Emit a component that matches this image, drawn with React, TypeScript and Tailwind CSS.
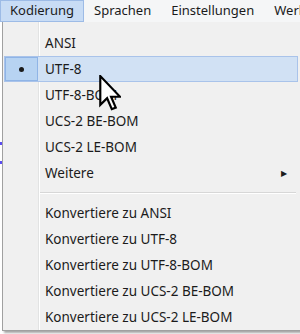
const font = { fontFamily: '"Segoe UI", "Noto Sans", "Open Sans", sans-serif' };

type Row =
  | { kind: "item"; label: string; checked?: boolean; active?: boolean; sub?: boolean }
  | { kind: "sep" };

const rows: Row[] = [
  { kind: "item", label: "ANSI" },
  { kind: "item", label: "UTF-8", checked: true, active: true },
  { kind: "item", label: "UTF-8-BOM" },
  { kind: "item", label: "UCS-2 BE-BOM" },
  { kind: "item", label: "UCS-2 LE-BOM" },
  { kind: "item", label: "Weitere", sub: true },
  { kind: "sep" },
  { kind: "item", label: "Konvertiere zu ANSI" },
  { kind: "item", label: "Konvertiere zu UTF-8" },
  { kind: "item", label: "Konvertiere zu UTF-8-BOM" },
  { kind: "item", label: "Konvertiere zu UCS-2 BE-BOM" },
  { kind: "item", label: "Konvertiere zu UCS-2 LE-BOM" },
];

function Cursor() {
  return (
    <svg
      className="pointer-events-none absolute left-[99px] top-[75px]"
      width="22"
      height="36"
      viewBox="0 0 12 20"
      aria-hidden
    >
      <path
        d="M0.6 0.6 L0.6 16.6 L4.4 12.9 L7 19 L9.2 18.1 L6.6 12.1 L11.6 12.1 Z"
        fill="#fff"
        stroke="#000"
        strokeWidth="1.2"
        strokeLinejoin="miter"
      />
    </svg>
  );
}

function MenuRow({ row }: { row: Row }) {
  if (row.kind === "sep") {
    return (
      <div className="flex h-[14px] items-center">
        <div className="ml-[36px] mr-[4px] flex-1 border-t border-b border-t-[#d7d7d7] border-b-white" />
      </div>
    );
  }
  return (
    <div
      className={
        "relative flex h-[26px] items-center " +
        (row.active ? "mr-[2px] border border-[#a9c3ea] bg-[#d1e1f4]" : "border border-transparent")
      }
    >
      <div className="flex w-[33px] items-center justify-center self-stretch">
        {row.checked && (
          <div className="flex h-full w-full items-center justify-center border border-[#8fb4e6] bg-[#b7d3f2]">
            <div className="h-[5px] w-[5px] rounded-full bg-[#1a1a1a]" />
          </div>
        )}
      </div>
      <span className="ml-[7px] flex-1 text-[13.5px] text-[#1b1b1b]">{row.label}</span>
      {row.sub && (
        <span className="mr-[12px] text-[8px] leading-none text-[#1b1b1b]">▶</span>
      )}
    </div>
  );
}

export default function App() {
  return (
    <div className="relative h-[334px] w-[300px] overflow-hidden bg-white" style={font}>
      <div className="flex h-[22px] items-end bg-[#f5f6f7] text-[13px] whitespace-nowrap text-[#1b1b1b]">
        <div className="flex h-[22px] items-center border border-[#9dbbe6] bg-[#c8dcf5] px-[9px]">
          Kodierung
        </div>
        <div className="flex h-[22px] items-center px-[10px]">Sprachen</div>
        <div className="flex h-[22px] items-center px-[10px]">Einstellungen</div>
        <div className="flex h-[22px] items-center px-[10px]">Werkzeuge</div>
      </div>
      <div className="flex">
        <div className="flex w-[2px] flex-col">
          <div className="mt-[120px] h-[3px] w-[2px] bg-[#5b4cf0]" />
          <div className="mt-[16px] h-[3px] w-[2px] bg-[#5b4cf0]" />
        </div>
        <div className="relative h-[309px] w-[300px] border-l border-b border-[#a0a0a0] bg-[#f0f0f0] pt-[8px] pl-[1px] shadow-[2px_2px_2px_rgba(0,0,0,0.35)]">
          <div className="absolute top-0 bottom-0 left-[35px] w-[2px] border-l border-r border-l-[#e2e3e3] border-r-white" />
          {rows.map((r, i) => (
            <MenuRow key={i} row={r} />
          ))}
        </div>
      </div>
      <Cursor />
    </div>
  );
}
